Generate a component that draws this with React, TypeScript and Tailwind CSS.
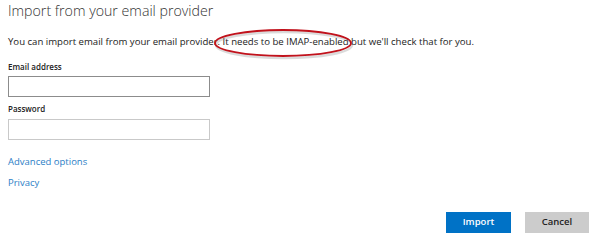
export default function App() {
  return (
    <div className="relative w-[600px] h-[245px] bg-white text-[#222] font-['Open_Sans',sans-serif] overflow-hidden">
      <div className="px-2 pt-[1px]">
        <h1 className="text-[14.2px] font-light leading-[20px] text-[#333]">Import from your email provider</h1>
        <p className="mt-[14px] text-[9.6px] leading-[14px]">
          You can import email from your email provider. It needs to be IMAP-enabled but we'll check that for you.
        </p>
        <label className="block mt-[12px] text-[8px] font-semibold leading-[12px]">Email address</label>
        <input className="block mt-[3px] w-[202px] h-[21px] border border-[#8c8c8c] outline-none" />
        <label className="block mt-[6px] text-[8px] font-semibold leading-[12px]">Password</label>
        <input type="password" className="block mt-[4px] w-[202px] h-[21px] border border-[#c9c9c9] outline-none" />
        <div className="mt-[15px] flex flex-col gap-[7px] text-[9.5px] leading-[14px] text-[#2b7ec6]">
          <a>Advanced options</a>
          <a>Privacy</a>
        </div>
        <div className="mt-[22px] flex justify-end gap-[14px] pr-[3px]">
          <button className="w-[65px] h-[21px] bg-[#0072c6] text-white text-[9.5px] font-semibold">Import</button>
          <button className="w-[64px] h-[21px] bg-[#cccccc] text-[#222] text-[9.5px] font-semibold">Cancel</button>
        </div>
      </div>
      <svg className="absolute left-[213px] top-[28px]" width="144" height="34" viewBox="0 0 144 34">
        <ellipse cx="71" cy="17" rx="68" ry="13" fill="none" stroke="#888" strokeOpacity="0.3" strokeWidth="2.5" />
        <ellipse cx="70" cy="15" rx="68" ry="13" fill="none" stroke="#c1121c" strokeWidth="1.8" />
      </svg>
    </div>
  )
}
